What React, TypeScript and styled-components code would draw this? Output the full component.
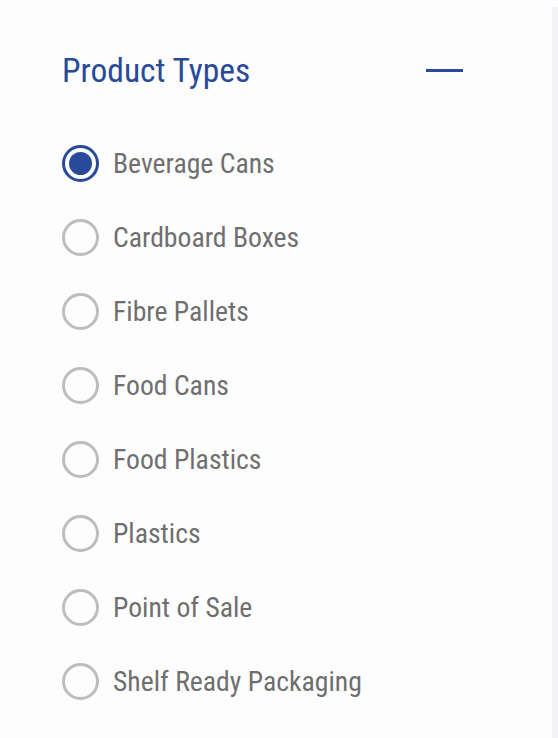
import React, { useState } from "react";
import styled, { createGlobalStyle } from "styled-components";

const GlobalStyle = createGlobalStyle`
  html, body {
    margin: 0;
    padding: 0;
    background: #ffffff;
  }
`;

const types = [
  "Beverage Cans",
  "Cardboard Boxes",
  "Fibre Pallets",
  "Food Cans",
  "Food Plastics",
  "Plastics",
  "Point of Sale",
  "Shelf Ready Packaging",
];

function App() {
  const [selected, setSelected] = useState(types[0]);

  return (
    <Page>
      <GlobalStyle />
      <Panel>
        <Header>
          <h2>Product Types</h2>
          <Collapse aria-label="collapse" />
        </Header>
        <List>
          {types.map((t) => (
            <Option key={t} onClick={() => setSelected(t)}>
              <Radio checked={selected === t} />
              <span>{t}</span>
            </Option>
          ))}
        </List>
      </Panel>
      <Edge />
    </Page>
  );
}

const Page = styled.div`
  display: flex;
  width: 558px;
  height: 738px;
  background: #fdfdfd;
  overflow: hidden;
`;

const Panel = styled.div`
  flex: 1;
  padding: 48px 0 0 62px;
  font-family: "Roboto Condensed", "Liberation Sans", sans-serif;
`;

const Edge = styled.div`
  width: 6px;
  margin-top: 7px;
  background: #f3f3f5;
`;

const Header = styled.div`
  display: flex;
  align-items: center;
  justify-content: space-between;
  width: 401px;
  height: 44px;

  & h2 {
    margin: 0;
    font-size: 33.5px;
    font-weight: 400;
    color: #284a98;
  }
`;

const Collapse = styled.button`
  width: 37px;
  height: 3px;
  padding: 0;
  border: none;
  background: #284a98;
  cursor: pointer;
`;

const List = styled.div`
  display: flex;
  flex-direction: column;
  gap: 38px;
  margin-top: 53px;
`;

const Option = styled.label`
  display: flex;
  align-items: center;
  gap: 14px;
  height: 36px;
  cursor: pointer;

  & span {
    font-size: 27.7px;
    color: #6f6f6f;
  }
`;

const Radio = styled.span<{ checked: boolean }>`
  box-sizing: border-box;
  display: flex;
  flex-shrink: 0;
  align-items: center;
  justify-content: center;
  width: 37px;
  height: 37px;
  border-radius: 50%;
  border: 3px solid ${(p) => (p.checked ? "#284a98" : "#bdbdbd")};

  &::after {
    content: "";
    width: 23px;
    height: 23px;
    border-radius: 50%;
    background: ${(p) => (p.checked ? "#284a98" : "transparent")};
  }
`;

export default App;
